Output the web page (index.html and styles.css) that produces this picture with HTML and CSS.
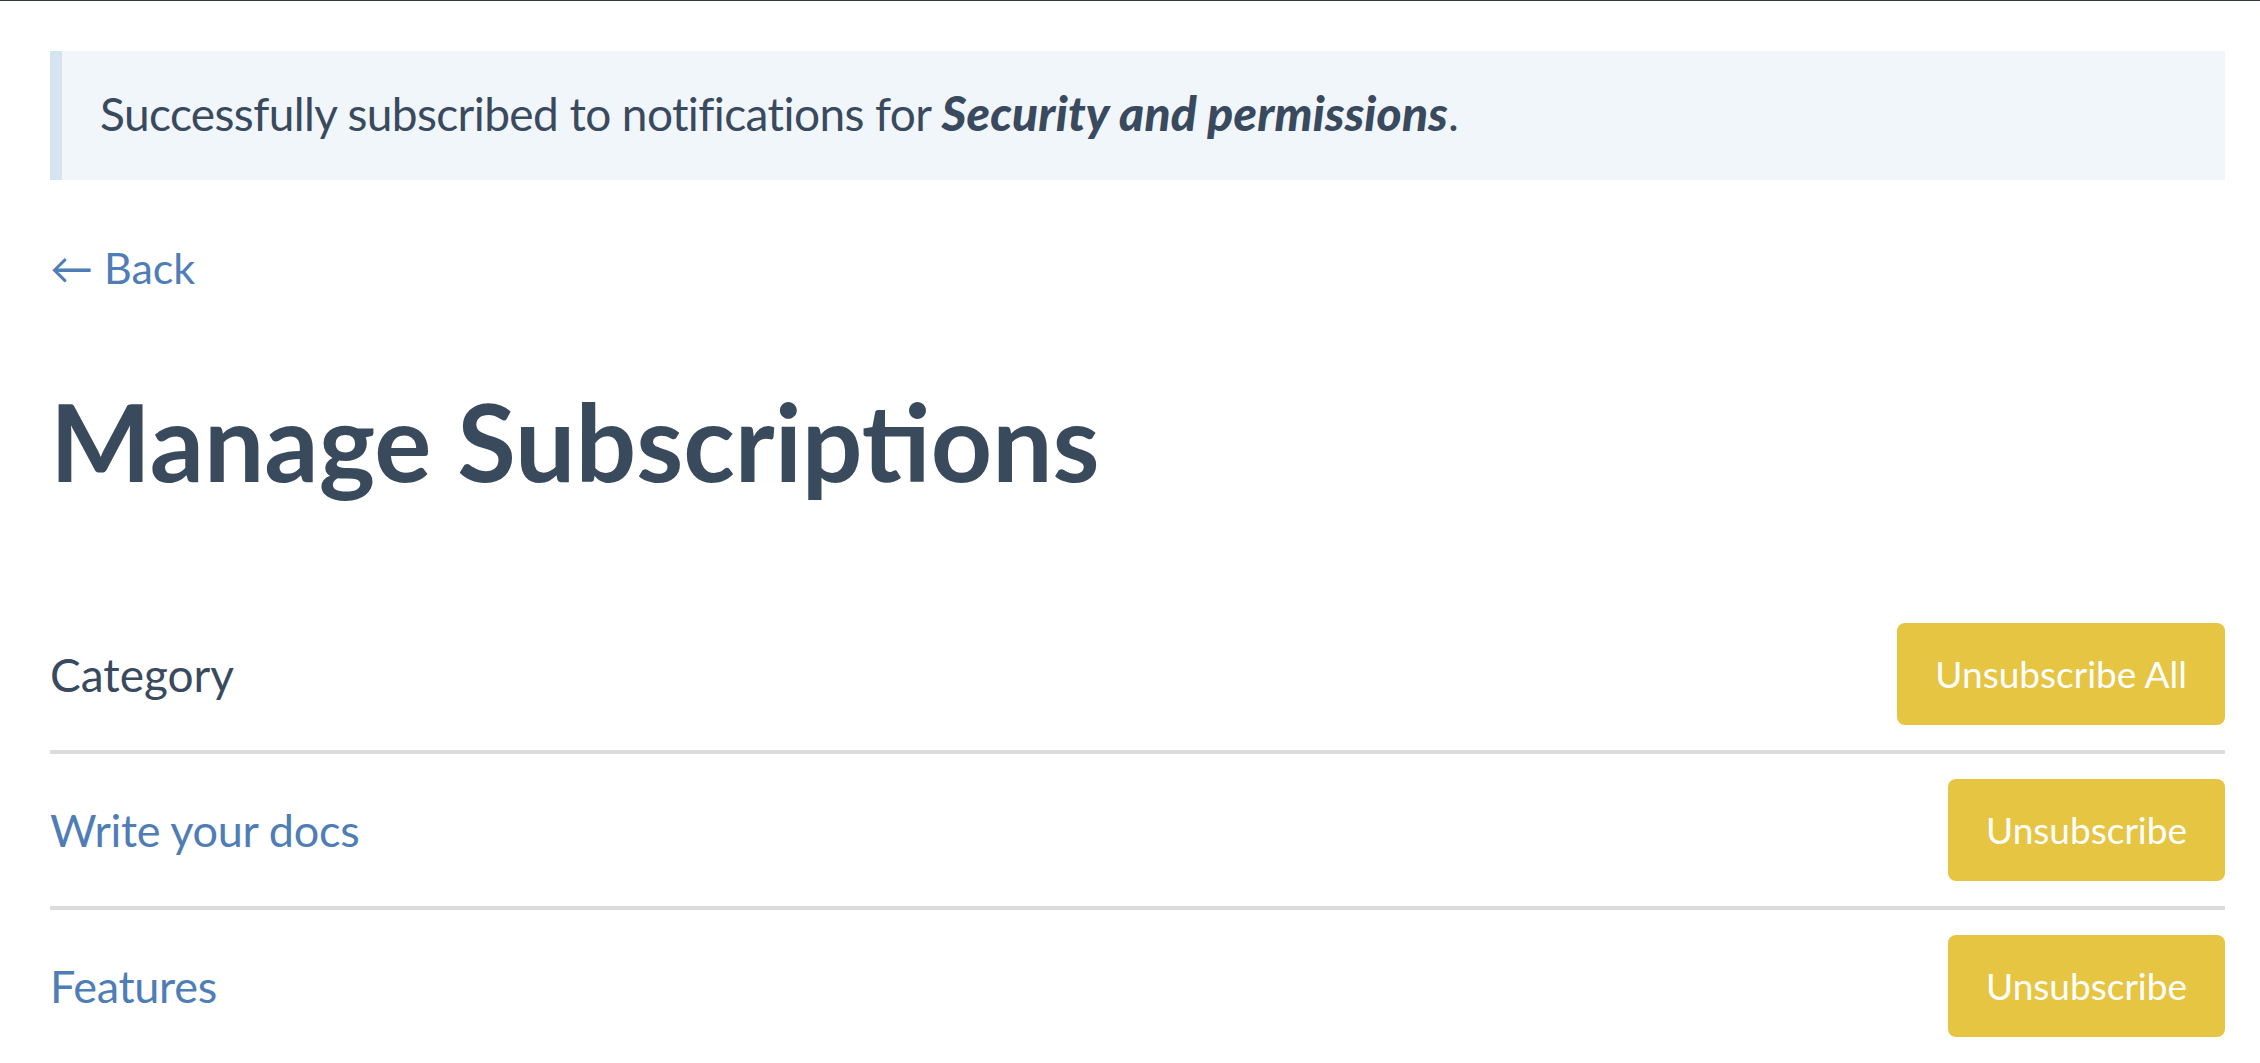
FILE: index.html
```html
<!DOCTYPE html>
<html lang="en">
<head>
<meta charset="utf-8">
<title>Manage Subscriptions</title>
<link rel="stylesheet" href="styles.css">
</head>
<body>
<div class="page">
  <div class="alert">Successfully subscribed to notifications for <strong><em>Security and permissions</em></strong>.</div>
  <a class="back" href="#">&larr; Back</a>
  <h1 class="title">Manage Subscriptions</h1>
  <div class="subs">
    <div class="row">
      <span class="label">Category</span>
      <button class="btn">Unsubscribe All</button>
    </div>
    <div class="row">
      <a class="label link" href="#">Write your docs</a>
      <button class="btn">Unsubscribe</button>
    </div>
    <div class="row">
      <a class="label link" href="#">Features</a>
      <button class="btn">Unsubscribe</button>
    </div>
  </div>
</div>
</body>
</html>
```

FILE: styles.css
```css
html, body {
  margin: 0;
  padding: 0;
  background: #ffffff;
}
body {
  border-top: 1px solid #343a46;
  font-family: "Lato", "Noto Sans", sans-serif;
  color: #3a4a5e;
}
.page {
  padding: 50px 35px 0 50px;
}
.alert {
  background: #f1f6fa;
  border-left: 12px solid #d6e3f1;
  padding: 34px 38px 38px;
  font-size: 46px;
  line-height: 56px;
  letter-spacing: -0.6px;
  color: #3a4a5e;
}
.alert strong {
  font-weight: 900;
  font-size: 1.04em;
  letter-spacing: 0.2px;
}
.back {
  display: inline-block;
  margin-top: 60px;
  font-size: 43px;
  line-height: 56px;
  color: #4f7db6;
  text-decoration: none;
}
.title {
  margin: 85px 0 0;
  font-size: 107px;
  line-height: 120px;
  font-weight: 700;
  color: #3a4a5d;
}
.subs {
  margin-top: 97px;
}
.row {
  display: flex;
  align-items: center;
  justify-content: space-between;
  padding: 25px 0;
  border-bottom: 4px solid #dcdcdc;
}
.row:last-child {
  border-bottom: none;
}
.label {
  font-size: 46px;
  color: #3a4a5e;
  text-decoration: none;
}
.label.link {
  font-size: 45px;
  letter-spacing: -0.3px;
  color: #4f7db6;
}
.btn {
  font-family: "Lato", "Noto Sans", sans-serif;
  font-size: 37px;
  line-height: 40px;
  color: #ffffff;
  background: #e6c543;
  border: none;
  border-radius: 8px;
  padding: 31px 38px;
  cursor: pointer;
}
```
